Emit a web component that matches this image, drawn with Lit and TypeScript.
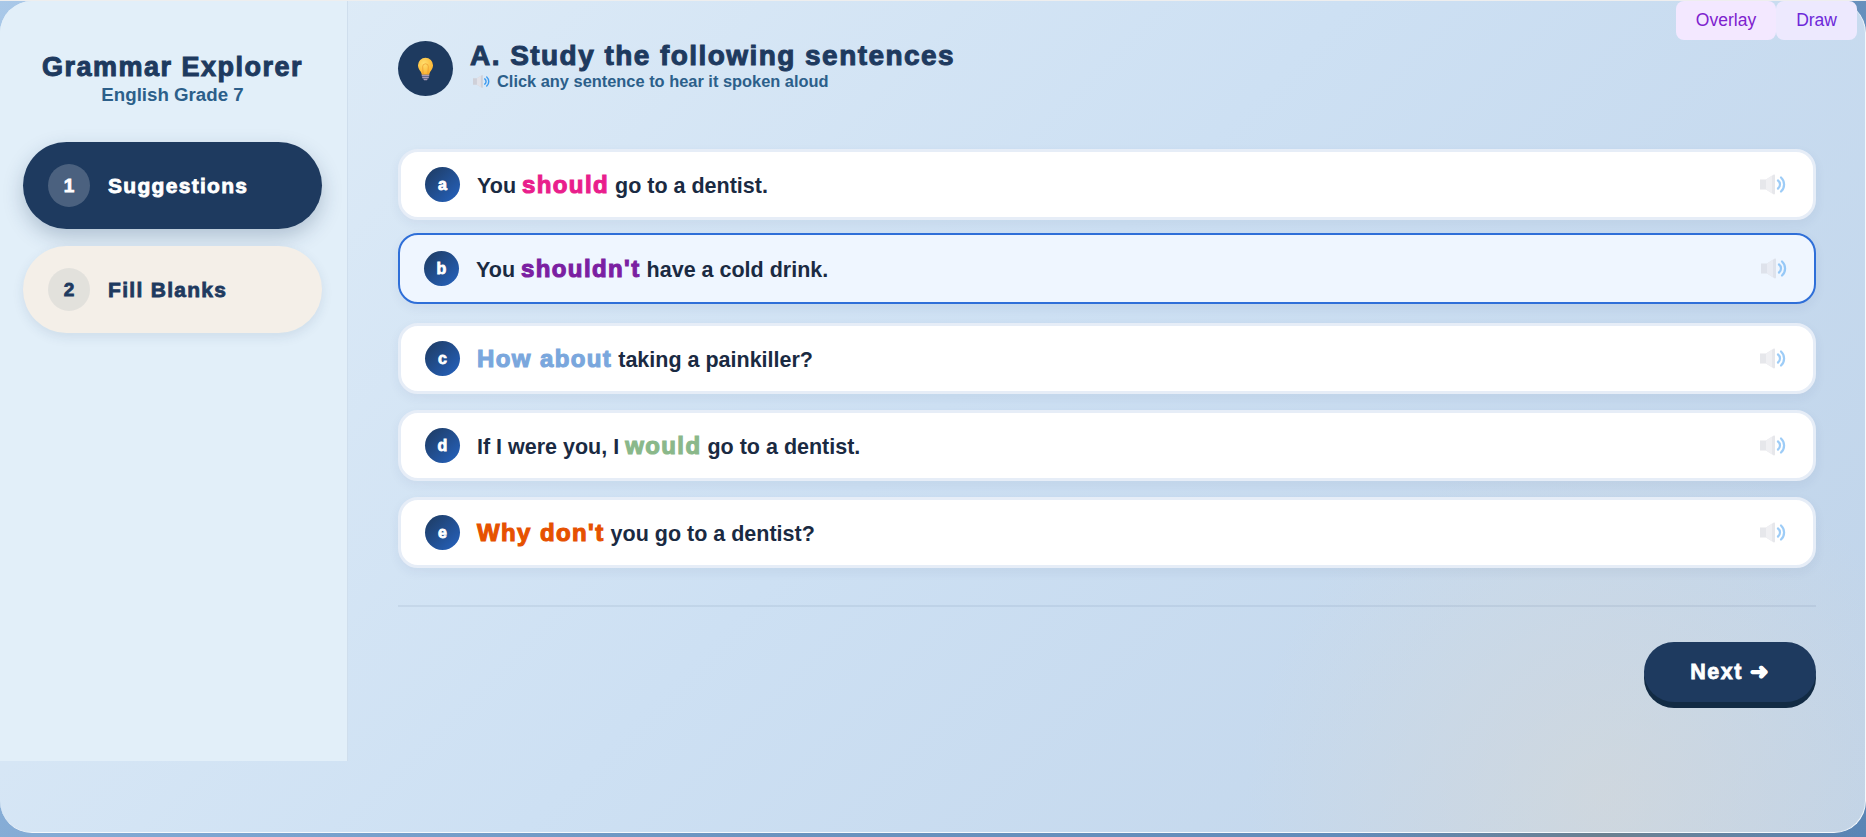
import { LitElement, html, css, svg } from "lit";
import { customElement } from "lit/decorators.js";

const speaker = () => html`<svg class="spk" viewBox="0 0 26 21" aria-hidden="true">
  <path d="M0 5.500h6L13.500.8c.8-.5 1.500 0 1.500 1v17.400c0 1-.7 1.500-1.500 1L6 15.500H0z" fill="#cfd0d8"/>
  <path d="M6 5.500L12 1.800V19.200L6 15.500z" fill="#e2e2e8"/>
  <path d="M18 6.500a5 5 0 0 1 0 8" fill="none" stroke="#3d9bf0" stroke-width="2.200" stroke-linecap="round"/>
  <path d="M21 3.500a9.500 9.500 0 0 1 0 14" fill="none" stroke="#3d9bf0" stroke-width="2.200" stroke-linecap="round"/>
</svg>`;

const bulb = svg`<svg class="bulb" viewBox="0 0 18 26" aria-hidden="true">
  <defs><radialGradient id="g" cx=".4" cy=".35" r=".7"><stop offset="0" stop-color="#ffdf6e"/><stop offset="1" stop-color="#fbb02c"/></radialGradient></defs>
  <path d="M9 1a8 8 0 0 0-8 8c0 3.200 1.800 5 3 6.800.700 1.100.9 2 1 3.200h8c.1-1.200.3-2.100 1-3.200 1.200-1.800 3-3.600 3-6.800a8 8 0 0 0-8-8z" fill="url(#g)"/>
  <path d="M6.500 18.500L6 10.500a3 3 0 1 1 6 0l-.5 8" fill="none" stroke="#e9932a" stroke-width=".7"/>
  <path d="M5 19.200h8v1.500H5zM5.500 21.200h7v1.500h-7zM6.500 23.200h5l-1 1.800h-3z" fill="#a99bb8"/>
</svg>`;

const ROWS = [
  { l: "a", pre: "You ", em: "should", c: "pink", post: " go to a dentist.", on: false },
  { l: "b", pre: "You ", em: "shouldn't", c: "purple", post: " have a cold drink.", on: true },
  { l: "c", pre: "", em: "How about", c: "blue", post: " taking a painkiller?", on: false },
  { l: "d", pre: "If I were you, I ", em: "would", c: "green", post: " go to a dentist.", on: false },
  { l: "e", pre: "", em: "Why don't", c: "orange", post: " you go to a dentist?", on: false },
];

@customElement("app-root")
export class AppRoot extends LitElement {
  static styles = css`
    :host {
      display: block;
      position: relative;
      width: 1866px;
      height: 837px;
      overflow: hidden;
      font-family: "Liberation Sans", Arial, sans-serif;
      background:
        radial-gradient(circle at 86% 100%, #6b8090 0, rgba(107, 128, 144, 0) 14%),
        linear-gradient(135deg, #a9c8e8 0%, #7ba4d0 40%, #6a93bf 60%, #5a85b5 100%);
      border-top: 1px solid #eeeeee;
      box-sizing: border-box;
    }
    .app {
      box-sizing: border-box;
      width: 1866px;
      height: 832px;
      border-radius: 32px;
      border-bottom: 1px solid #f4f8fc;
      border-right: 1px solid #f4f8fc;
      overflow: hidden;
      display: flex;
      align-items: flex-start;
      background:
        radial-gradient(circle at 86% 96%, rgba(215, 216, 214, 0.6) 0, rgba(215, 216, 214, 0) 20%),
        linear-gradient(135deg, #e2eef8 0%, #cde0f3 50%, #bfd3e9 100%);
    }
    .side {
      box-sizing: border-box;
      flex: 0 0 348px;
      height: 760px;
      background: #e2eff9;
      border-right: 1px solid #cfdeed;
      padding: 50px 25px 0 23px;
    }
    .brand { text-align: center; margin-bottom: 37px; }
    .brand h1, .hd h2 { -webkit-text-stroke: 1px currentColor; }
    .pill b, .next, .num, .bad { -webkit-text-stroke: 0.8px currentColor; }
    .em { -webkit-text-stroke: 1.100px currentColor; }
    .brand h1 {
      margin: 0 0 1px;
      font-size: 27px;
      line-height: 32px;
      font-weight: 700;
      letter-spacing: 1.500px;
      color: #1e3a5f;
    }
    .brand p { margin: 0; font-size: 18.700px; line-height: 21px; font-weight: 700; color: #2c5f8a; }
    .nav { display: flex; flex-direction: column; gap: 17px; }
    .pill {
      height: 87px;
      border-radius: 44px;
      display: flex;
      align-items: center;
      gap: 18px;
      padding-left: 25px;
      background: #f4efe8;
      color: #1e3a5f;
      box-shadow: 0 4px 12px rgba(30, 58, 95, 0.1);
    }
    .pill.on { background: #1e3a5f; color: #fff; box-shadow: 0 8px 20px rgba(30, 58, 95, 0.25); }
    .num {
      width: 42px;
      height: 43px;
      border-radius: 50%;
      display: flex;
      align-items: center;
      justify-content: center;
      font-size: 19px;
      font-weight: 700;
      background: rgba(30, 58, 95, 0.08);
    }
    .pill.on .num { background: rgba(255, 255, 255, 0.2); }
    .pill b { font-size: 21px; letter-spacing: 1.300px; font-weight: 700; }
    .main {
      flex: 1;
      box-sizing: border-box;
      padding: 40px 49px 0 50px;
      min-width: 0;
    }
    .hd { display: flex; align-items: flex-start; gap: 17px; height: 55px; margin-bottom: 53px; }
    .icon {
      flex: none;
      width: 55px;
      height: 55px;
      border-radius: 50%;
      background: #1e3a5f;
      display: flex;
      align-items: center;
      justify-content: center;
    }
    .bulb { width: 17px; height: 26px; }
    .hd h2 {
      margin: -1px 0 1px;
      font-size: 28px;
      line-height: 31px;
      font-weight: 700;
      letter-spacing: 1.450px;
      color: #1e3a5f;
    }
    .sub {
      display: flex;
      align-items: center;
      gap: 7px;
      font-size: 16.400px;
      line-height: 19px;
      font-weight: 700;
      color: #2c5f8a;
      padding-left: 3px;
    }
    .sub .spk { width: 17px; height: 15px; }
    .list { display: flex; flex-direction: column; gap: 16px; }
    .row {
      box-sizing: border-box;
      height: 71px;
      border-radius: 20px;
      border: 3px solid #e6edf7;
      background: #fff;
      display: flex;
      align-items: center;
      padding: 0 27px 0 24px;
      gap: 17px;
      box-shadow: 0 4px 12px rgba(30, 58, 95, 0.06);
    }
    .row.on {
      border: 2.500px solid #2f6fd8;
      background: #eff6ff;
      transform: translateY(-3px);
    }
    .bad {
      width: 35px;
      height: 35px;
      border-radius: 50%;
      background: linear-gradient(135deg, #1e3a5f, #2563c0);
      color: #fff;
      display: flex;
      align-items: center;
      justify-content: center;
      font-size: 16px;
      font-weight: 700;
    }
    .txt { flex: 1; font-size: 21.500px; font-weight: 700; color: #1a2a42; white-space: pre; }
    .em { font-size: 24px; letter-spacing: 1.400px; }
    .pink { color: #e91e8c; }
    .purple { color: #7b1fa2; }
    .blue { color: #7aa7dd; }
    .green { color: #8ab88a; }
    .orange { color: #e65100; }
    .row .spk { width: 26px; height: 21px; opacity: 0.5; }
    .rule { height: 2px; background: rgba(30, 58, 95, 0.07); margin-top: 37px; }
    .foot { display: flex; justify-content: flex-end; margin-top: 35px; }
    .next {
      width: 172px;
      height: 60px;
      border: none;
      border-radius: 30px;
      background: #1e3a5f;
      color: #fff;
      font: 700 21.500px "Liberation Sans", Arial, sans-serif;
      letter-spacing: 1.500px;
      box-shadow: 0 6px 0 #122b44;
    }
    .tools { position: absolute; top: 0; right: 9px; display: flex; }
    .tools button {
      height: 39px;
      border: none;
      border-radius: 8px;
      padding: 0 20px;
      font: 17.500px "Liberation Sans", Arial, sans-serif;
      background: #f3e8ff;
      color: #7e22ce;
    }
    .tools button + button { background: #ede9fe; color: #6d28d9; }
  `;

  render() {
    return html`
      <div class="app">
        <aside class="side">
          <div class="brand">
            <h1>Grammar Explorer</h1>
            <p>English Grade 7</p>
          </div>
          <nav class="nav">
            <div class="pill on"><span class="num">1</span><b>Suggestions</b></div>
            <div class="pill"><span class="num">2</span><b>Fill Blanks</b></div>
          </nav>
        </aside>
        <main class="main">
          <header class="hd">
            <div class="icon">${bulb}</div>
            <div>
              <h2>A. Study the following sentences</h2>
              <div class="sub">${speaker()}<span>Click any sentence to hear it spoken aloud</span></div>
            </div>
          </header>
          <section class="list">
            ${ROWS.map(
              (r) => html`<div class="row ${r.on ? "on" : ""}">
                <span class="bad">${r.l}</span>
                <span class="txt">${r.pre}<span class="em ${r.c}">${r.em}</span>${r.post}</span>
                ${speaker()}
              </div>`
            )}
          </section>
          <div class="rule"></div>
          <div class="foot"><button class="next">Next ➜</button></div>
        </main>
      </div>
      <div class="tools"><button>Overlay</button><button>Draw</button></div>
    `;
  }
}
